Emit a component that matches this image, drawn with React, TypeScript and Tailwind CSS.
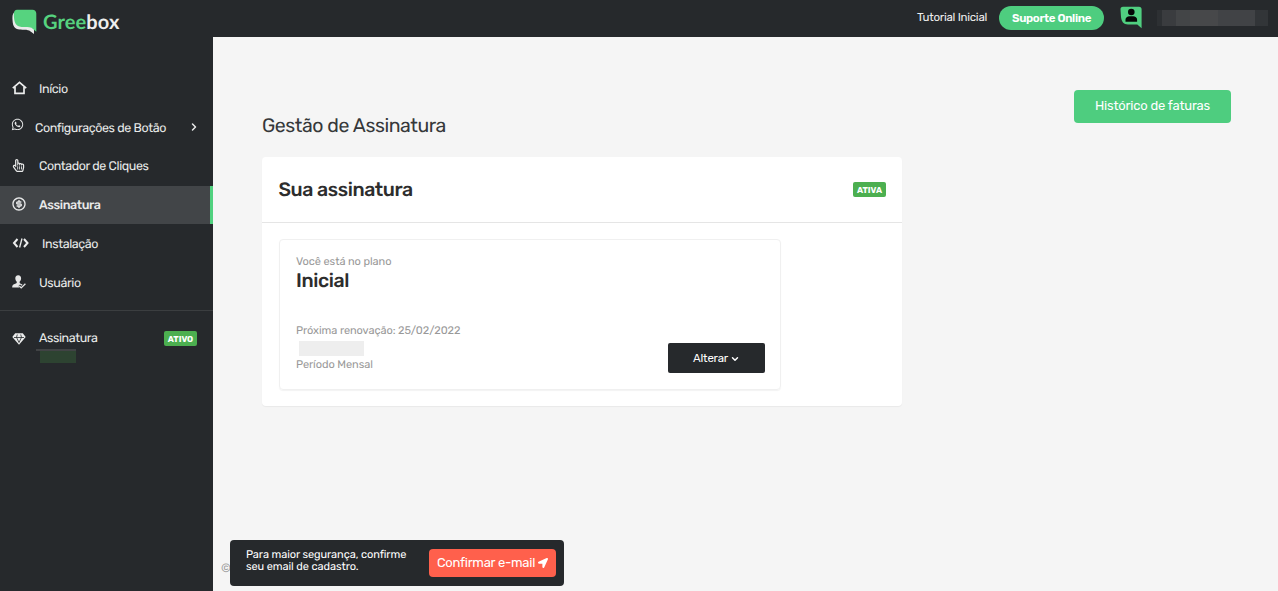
import React from "react";
import { FaLocationArrow, FaRegHandPointer, FaWhatsapp } from "react-icons/fa";
import { RiMoneyDollarCircleLine } from "react-icons/ri";
import { LuChevronDown, LuChevronRight } from "react-icons/lu";

function HomeIcon() {
  return (
    <svg width="15" height="14" viewBox="0 0 15 14" fill="none" stroke="#eceded" strokeWidth="1.7">
      <path d="M.8 7.2 7.5 1.3l6.7 5.9M3 6v6.4h9V6" />
    </svg>
  );
}

function CodeIcon() {
  return (
    <svg width="17" height="12" viewBox="0 0 17 12" fill="none" stroke="#eceded" strokeWidth="2">
      <path d="M5.500 2 2 6l3.500 4M12 2l3.500 4L12 10" />
      <path d="M10 1.500 7.600 10.500" strokeWidth="1.300" />
    </svg>
  );
}

function GemIcon() {
  return (
    <svg width="14" height="12" viewBox="0 0 14 12">
      <path d="M3.200.3h7.600l2.900 3.700L7 11.800.3 4Z" fill="#eceded" />
      <path d="M2 4.500h10M5.300 1.500 4.500 4.300 7 9.500l2.500-5.200-.8-2.800" fill="none" stroke="#26292c" strokeWidth="0.800" />
    </svg>
  );
}

function UserCheckIcon() {
  return (
    <svg width="14" height="14" viewBox="0 0 14 14" fill="#e6e7e7">
      <path d="M6.2.3C4.2.3 3.2 1.7 3.3 3.6c.1 1.600.8 2.600 1.500 3.200 0 1.100-.1 1.500-1 1.800L1.500 9.500C.5 10 .2 11 .2 12.500h7.300l-1-1.500 1.500-1.500 1.500 1.300 1-1-.2-.3-1.700-.8c-.9-.4-1-.9-1-1.900.8-.7 1.400-1.700 1.500-3.200C9.200 1.700 8.200.3 6.200.3Z" />
      <path d="m7.300 11 1.900 1.900 4.200-4.200" fill="none" stroke="#e6e7e7" strokeWidth="1.300" />
    </svg>
  );
}

function Logo() {
  return (
    <svg width="25" height="26" viewBox="0 0 25 26">
      <path d="M2 3.500C.3 5 .3 8 .6 12c.3 5 2 8.300 7 8.600 3.500.2 7-.3 9.600.9L22 25v-7Z" fill="#e9eaea" />
      <path d="M5 .7h15.500c2.200 0 3.800 1.500 3.800 3.700v18.300l-4.800-4c-3.500-1.300-6.500-.3-10-.7C4 17.400 2.300 13.500 2 8.500 1.800 5 1.500.7 5 .7Z" fill="#56d37f" />
    </svg>
  );
}

function AvatarIcon() {
  return (
    <svg width="22" height="23" viewBox="0 0 22 23">
      <path d="M3 .7h16c1.700 0 2.600 1 2.600 2.600v18.900l-4.300-3.700H8C3.500 18.500 1.500 15.500 1 11L.5 3.500C.4 1.700 1.300.7 3 .7Z" fill="#50cf80" />
      <circle cx="11.300" cy="6" r="3.300" fill="#050807" />
      <path d="M5.500 15.800v-2c0-2.400 1.800-3.600 4-3.600h3.600c2.200 0 4 1.200 4 3.600v2Z" fill="#050807" />
    </svg>
  );
}

type Item = { label: string; icon: React.ReactNode; text: string; active?: boolean; arrow?: boolean };

const items: Item[] = [
  { label: "Início", icon: <HomeIcon />, text: "ml-[12px]" },
  { label: "Configurações de Botão", icon: <FaWhatsapp size={13} className="-ml-px mb-[4px]" />, text: "ml-[11px]", arrow: true },
  { label: "Contador de Cliques", icon: <FaRegHandPointer size={13} />, text: "ml-[14px]" },
  { label: "Assinatura", icon: <RiMoneyDollarCircleLine size={16} className="-ml-px" />, text: "ml-[12px] font-medium", active: true },
  { label: "Instalação", icon: <CodeIcon />, text: "ml-[13px]" },
  { label: "Usuário", icon: <UserCheckIcon />, text: "ml-[13px]" },
];

function Badge({ children }: { children: React.ReactNode }) {
  return (
    <span className="flex h-[15px] w-[33px] items-center justify-center rounded-[2px] bg-[#4caf50] pt-[3px] text-[8.5px] leading-none font-bold tracking-normal text-white">
      {children}
    </span>
  );
}

function Sidebar() {
  return (
    <aside className="w-[213px] shrink-0 bg-[#26292c] pt-[32.2px] text-[12.5px] tracking-[-0.4px] text-[#e8e9e9]">
      <nav>
        {items.map((item) => (
          <a
            key={item.label}
            className={
              item.active
                ? "flex h-[38.8px] items-center border-r-[3px] border-[#50d17f] bg-[#424548] pl-3"
                : "flex h-[38.8px] items-center pl-3"
            }
          >
            <span className="flex shrink-0 items-center pb-px">{item.icon}</span>
            <span className={`pt-[3px] whitespace-nowrap ${item.text}`}>{item.label}</span>
            {item.arrow && <LuChevronRight size={12} strokeWidth={3} className="mr-[13px] ml-auto" />}
          </a>
        ))}
      </nav>
      <div className="mt-[8.2px] border-t border-[#3b3e40] pt-[18px]">
        <div className="flex h-[19px] items-center justify-between pr-4 pl-[12px]">
          <div className="flex items-center">
            <GemIcon />
            <span className="ml-[13px] pt-[2px]">Assinatura</span>
          </div>
          <Badge>ATIVO</Badge>
        </div>
        <div className="mt-[1px] ml-9 h-[14px] w-10 border-t-2 border-[#414345] pl-1">
          <div className="h-3 w-9 bg-[#2d4331]" />
        </div>
      </div>
    </aside>
  );
}

function Header() {
  return (
    <header className="flex h-[37px] shrink-0 bg-[#26292c] text-white">
      <div className="flex pt-[9px] pl-3">
        <Logo />
        <span className="ml-[6px] text-[20px] leading-[26px] font-bold tracking-[0.1px] text-[#eeeeee]" style={{ fontFamily: 'Lato, sans-serif' }}>
          <span className="text-[#56d37f]">Gree</span>box
        </span>
      </div>
      <div className="ml-auto flex">
        <span className="mt-[9px] h-4 w-[82px] text-[11.5px] leading-4 tracking-[-0.25px] whitespace-nowrap text-[#eeeeee]">Tutorial Inicial</span>
        <button className="mt-[6px] h-6 w-[105px] rounded-full bg-[#4ecd7f] pt-px text-[11.5px] font-semibold tracking-[-0.35px] whitespace-nowrap">Suporte Online</button>
        <div className="mt-[6px] ml-4"><AvatarIcon /></div>
        <div className="mt-[10px] mr-[10px] ml-[15px] flex h-4 w-[111px]">
          <div className="w-[5px] bg-[#2d3033]" />
          <div className="w-[14px] bg-[#3a3c3f]" />
          <div className="w-[14px] bg-[#434547]" />
          <div className="w-[28px] bg-[#47484a]" />
          <div className="w-[37px] bg-[#414346]" />
          <div className="w-[13px] bg-[#323538]" />
        </div>
      </div>
    </header>
  );
}

function Plan() {
  return (
    <div className="mt-[16px] ml-[17px] flex h-[151px] w-[502px] justify-between rounded-[4px] border border-[#f0f0f0] pr-[15px] pl-[16px] shadow-[0_1px_1px_rgba(0,0,0,0.05)]">
      <div className="pt-[14px] text-[11px] leading-4 tracking-[-0.07px] text-[#999999]">
        <p>Você está no plano</p>
        <p className="text-[19.5px] leading-[22px] font-medium tracking-[-0.4px] text-[#2d2d2d]">Inicial</p>
        <p className="mt-[31px]">Próxima renovação: 25/02/2022</p>
        <div className="mt-[2px] ml-[3px] h-[15px] w-[65px] bg-[#eeeeee]" />
        <p className="mt-[1px]">Período Mensal</p>
      </div>
      <button className="mt-[103px] flex h-[30px] w-[97px] items-center justify-center gap-[2px] rounded-[2px] bg-[#26292c] pt-px text-[11.5px] tracking-[-0.2px] text-white">
        Alterar <LuChevronDown size={10} strokeWidth={3.5} />
      </button>
    </div>
  );
}

export default function App() {
  return (
    <div className="relative flex h-[591px] w-[1278px] flex-col overflow-hidden bg-[#f5f5f5] [text-rendering:geometricPrecision]" style={{ fontFamily: 'Rubik, Roboto, sans-serif' }}>
      <Header />
      <div className="flex flex-1">
        <Sidebar />
        <main className="flex flex-1 justify-between pr-[47px] pl-[49px]">
          <div>
            <h1 className="mt-[75px] text-[19.5px] leading-[28px] tracking-[-0.45px] text-[#36383a]">Gestão de Assinatura</h1>
            <section className="mt-[17px] h-[249px] w-[640px] rounded-[4px] bg-white shadow-[0_1px_1px_rgba(0,0,0,0.05)]">
              <div className="flex h-[66px] items-center justify-between border-b border-[#e5e5e5] pr-4 pl-[16.5px]">
                <h2 className="pt-px text-[19.5px] font-medium tracking-[-0.42px] text-[#2d2d2d]">Sua assinatura</h2>
                <Badge>ATIVA</Badge>
              </div>
              <Plan />
            </section>
          </div>
          <button className="mt-[53px] h-[33px] w-[157px] rounded-[4px] bg-[#4ecd7f] pb-px text-[13px] tracking-[-0.2px] text-white">Histórico de faturas</button>
        </main>
      </div>
      <span className="absolute top-[560px] left-[221px] text-[12px] leading-4 text-[#999]">©</span>
      <div className="absolute top-[540px] left-[230px] flex h-[46px] w-[334px] rounded-[4px] bg-[#26292c] text-white">
        <p className="mt-[9px] ml-4 w-[183px] text-[11px] leading-[12px] tracking-[-0.08px] whitespace-nowrap">
          Para maior segurança, confirme<br />seu email de cadastro.
        </p>
        <button className="mt-[9px] flex h-[28px] w-[127px] items-center justify-center gap-[3px] rounded-[4px] bg-[#ff604c] pb-px text-[13px] tracking-[-0.25px] whitespace-nowrap">
          Confirmar e-mail <FaLocationArrow size={10} className="mt-px" />
        </button>
      </div>
    </div>
  );
}
